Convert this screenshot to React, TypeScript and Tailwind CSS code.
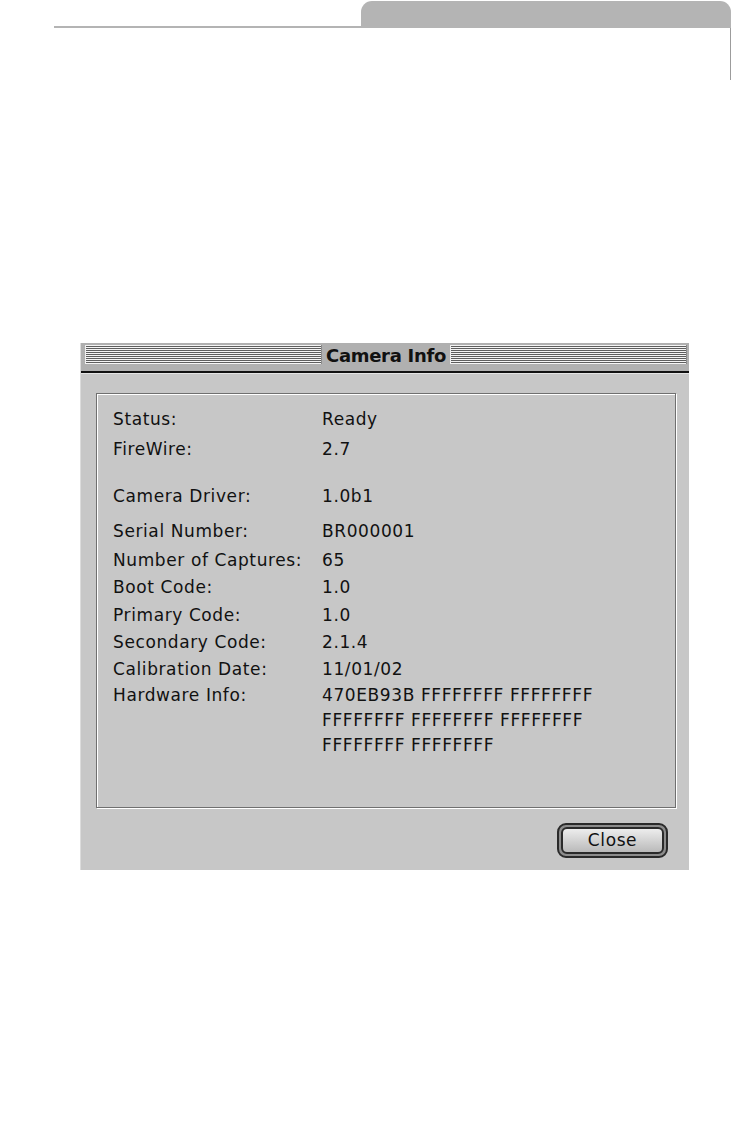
const rows = [
  { label: "Status:", value: "Ready", gap: "" },
  { label: "FireWire:", value: "2.7", gap: "mt-[3px]" },
  { label: "Camera Driver:", value: "1.0b1", gap: "mt-[20px]" },
  { label: "Serial Number:", value: "BR000001", gap: "mt-[8px]" },
  { label: "Number of Captures:", value: "65", gap: "mt-[2px]" },
  { label: "Boot Code:", value: "1.0", gap: "" },
  { label: "Primary Code:", value: "1.0", gap: "mt-px" },
  { label: "Secondary Code:", value: "2.1.4", gap: "" },
  { label: "Calibration Date:", value: "11/01/02", gap: "" },
];

const hardware = ["470EB93B FFFFFFFF FFFFFFFF", "FFFFFFFF FFFFFFFF FFFFFFFF", "FFFFFFFF FFFFFFFF"];

function Stripes() {
  return (
    <div className="flex-1 h-[19px] border-l border-[#f0f0f0] border-r border-r-[#8a8a8a] bg-[image:repeating-linear-gradient(to_bottom,#f4f4f4_0px,#f4f4f4_1px,#5e5e5e_1px,#5e5e5e_2px)]" />
  );
}

export default function App() {
  return (
    <div className="w-[732px] h-[1124px] bg-white font-['DejaVu_Sans',sans-serif] text-[#111]">
      {/* page header */}
      <header>
        <div className="flex items-end pt-px">
          <div className="ml-[54px] w-[307px] h-[2px] bg-[#b4b4b4]" />
          <div className="w-[370px] h-[27px] rounded-t-[11px] bg-[#b4b4b4]" />
        </div>
        <div className="ml-[730px] w-px h-[52px] bg-[#9c9c9c]" />
      </header>

      {/* dialog */}
      <div className="ml-[80px] mt-[263px] w-[609px] h-[527px] bg-[#c7c7c7] border-l border-[#dcdcdc] flex flex-col">
        <div className="h-[30px] bg-[#b0b0b0] border-b-2 border-[#111] flex items-start pt-[2px] pl-[4px] pr-[2px]">
          <Stripes />
          <span className="px-[4px] mt-[1px] text-[18px] leading-[19px] font-bold tracking-[-0.3px]">Camera Info</span>
          <Stripes />
        </div>

        <div className="flex-1 border-t border-[#e4e4e4]">
          <div className="ml-[15px] mt-[19px] w-[580px] h-[415px] border border-[#6f6f6f] shadow-[inset_1px_1px_0_#fff,1px_1px_0_#fff] pl-[16px] pt-[12px] text-[17px] tracking-[0.6px]">
            {rows.map((r) => (
              <div key={r.label} className={`flex h-[27px] leading-[27px] ${r.gap}`}>
                <span className="w-[209px] shrink-0">{r.label}</span>
                <span>{r.value}</span>
              </div>
            ))}
            <div className="flex leading-[25px]">
              <span className="w-[209px] shrink-0">Hardware Info:</span>
              <div>
                {hardware.map((line, i) => (
                  <div key={i} className="whitespace-pre">{line}</div>
                ))}
              </div>
            </div>
          </div>

          <div className="flex justify-end pr-[21px] mt-[15px]">
            <div className="w-[111px] h-[35px] rounded-[9px] border-2 border-[#2a2a2a] bg-[#8c8c8c] p-[2px]">
              <button className="w-full h-full rounded-[6px] border-2 border-[#2a2a2a] bg-gradient-to-b from-[#ededed] to-[#bababa] text-[17px] leading-none tracking-[0.6px] text-[#111]">
                Close
              </button>
            </div>
          </div>
        </div>
      </div>
    </div>
  );
}
